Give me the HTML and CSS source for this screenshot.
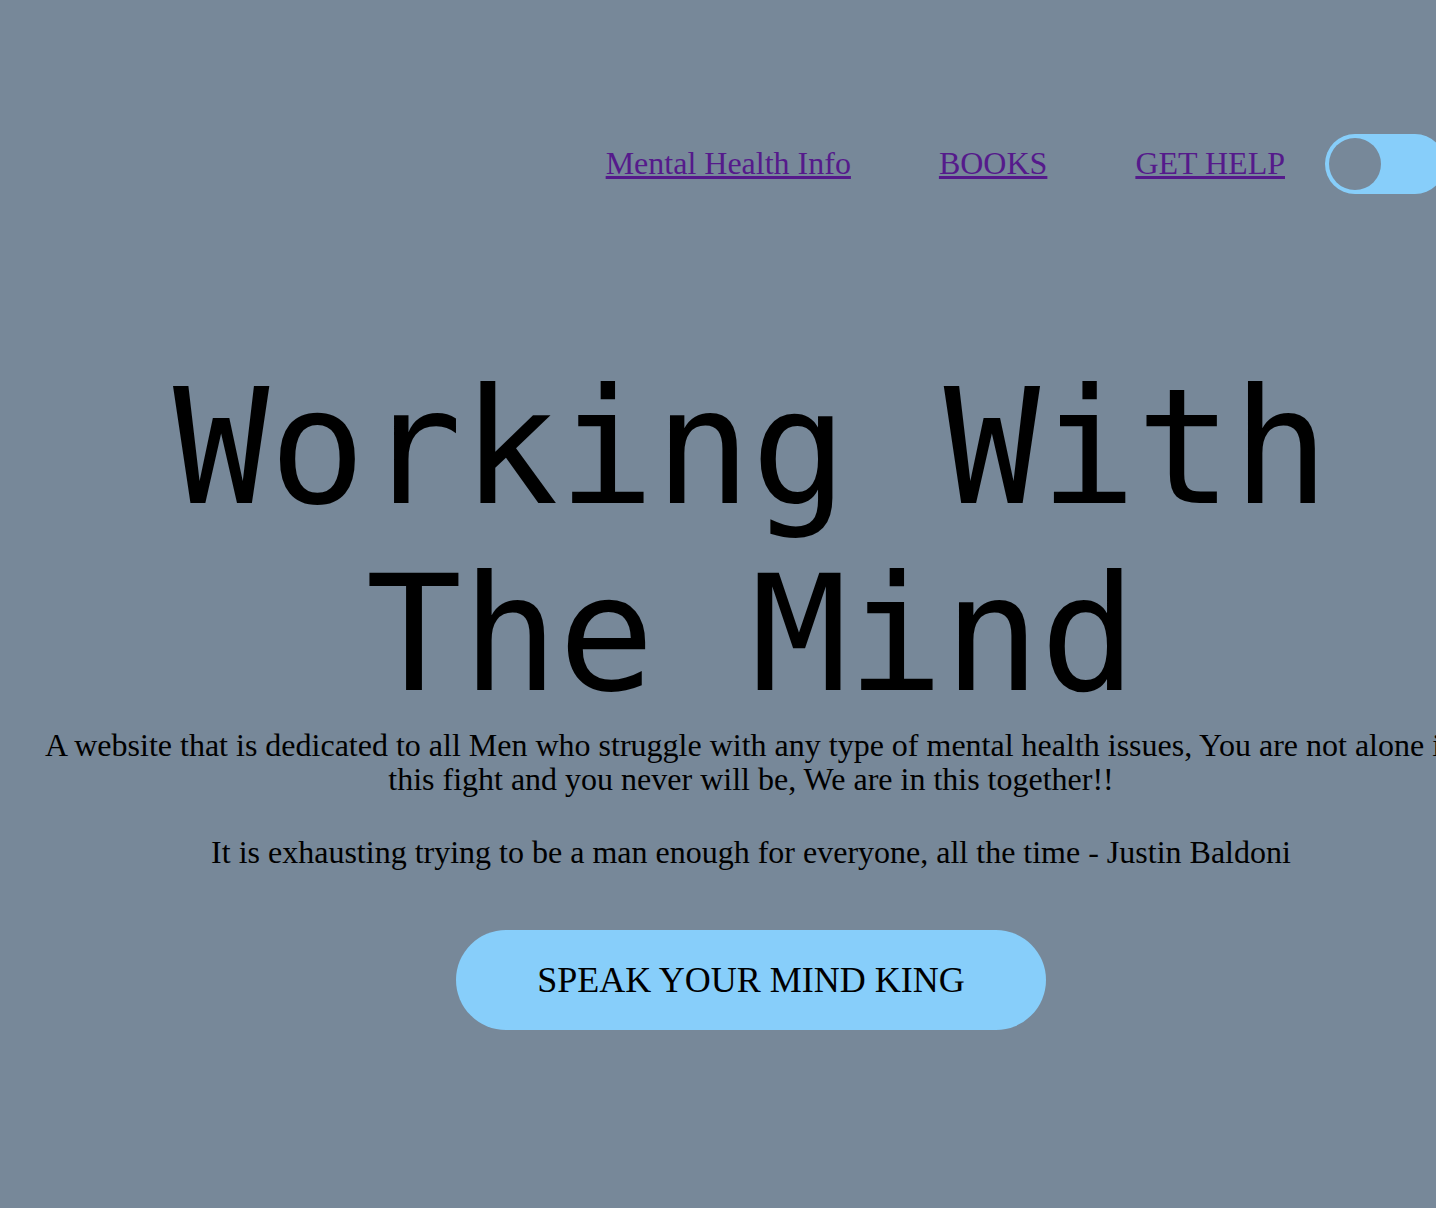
FILE: index.html
```html
<!DOCTYPE html>
<html lang="en">
<head>
<meta charset="utf-8">
<title>Working With The Mind</title>
<link rel="stylesheet" href="styles.css">
</head>
<body>
<header class="topbar">
  <nav class="nav">
    <a class="nav-link" href="#info">Mental Health Info</a>
    <a class="nav-link" href="#books">BOOKS</a>
    <a class="nav-link" href="#help">GET HELP</a>
  </nav>
  <label class="switch">
    <input class="switch-input" type="checkbox">
    <span class="switch-track"><span class="switch-knob"></span></span>
  </label>
</header>
<main class="hero">
  <h1 class="hero-title">Working With The Mind</h1>
  <p class="hero-intro">A website that is dedicated to all Men who struggle with any type of mental health issues, You are not alone in this fight and you never will be, We are in this together!!</p>
  <p class="hero-quote">It is exhausting trying to be a man enough for everyone, all the time - Justin Baldoni</p>
  <a class="cta" href="#speak">SPEAK YOUR MIND KING</a>
</main>
</body>
</html>
```
FILE: styles.css
```css
html {
  overflow-x: hidden;
}
body {
  margin: 0;
  background: #778899;
  font-family: "Liberation Serif", "Times New Roman", serif;
  color: #000;
}
.topbar {
  display: flex;
  justify-content: flex-end;
  align-items: center;
  padding: 134px 0 0 0;
  margin-right: -9px;
}
.nav {
  display: flex;
  align-items: center;
  gap: 88px;
  margin-right: 40px;
  margin-bottom: 3px;
}
.nav-link {
  font-size: 32px;
  line-height: 34px;
  color: #551a8b;
  text-decoration: underline;
}
.switch {
  display: block;
  width: 120px;
  height: 60px;
  flex: none;
}
.switch-input {
  display: none;
}
.switch-track {
  display: flex;
  align-items: center;
  box-sizing: border-box;
  width: 120px;
  height: 60px;
  padding: 0 4px;
  border-radius: 30px;
  background: #87cefa;
}
.switch-knob {
  width: 52px;
  height: 52px;
  border-radius: 50%;
  background: #778899;
}
.hero {
  width: 1430px;
  margin-left: 36px;
  text-align: center;
}
.hero-title {
  margin: 160px 0 0 0;
  font-family: "DejaVu Sans Mono", monospace;
  font-size: 160px;
  font-weight: normal;
}
.hero-intro {
  margin: 0;
  font-size: 32px;
  line-height: 34px;
}
.hero-quote {
  margin: 39px 0 0 0;
  font-size: 32px;
  line-height: 34px;
}
.cta {
  display: inline-flex;
  align-items: center;
  justify-content: center;
  width: 590px;
  height: 100px;
  margin-top: 61px;
  border-radius: 50px;
  background: #87cefa;
  color: #000;
  font-size: 36px;
  text-decoration: none;
}
```
